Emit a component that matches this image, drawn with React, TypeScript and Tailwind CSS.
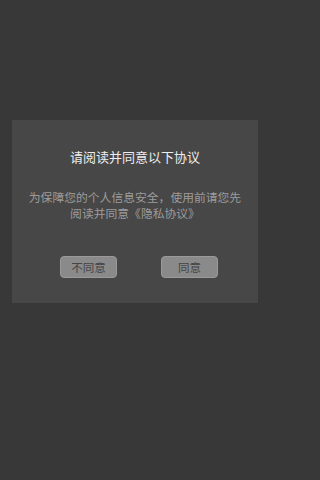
export default function App() {
  return (
    <div
      className="min-h-screen w-full bg-[#383838]"
      style={{ fontFamily: '"Noto Sans CJK SC", "Noto Sans", sans-serif' }}
    >
      <div className="h-[480px] w-[270px] pt-[120px]">
        <div className="mx-[12px] h-[183px] bg-[#474747] pt-[28px]">
          <h1 className="text-center text-[13px] leading-[18px] text-[#ededed]">请阅读并同意以下协议</h1>
          <p className="mt-[23px] text-center text-[11.8px] leading-[16px] text-[#9c9c9c]">
            为保障您的个人信息安全，使用前请您先
            <br />
            阅读并同意《隐私协议》
          </p>
          <div className="mt-[35px] flex gap-[44px] pl-[48px]">
            <button className="h-[22px] w-[57px] rounded-[4px] border border-[#9a9a9a] bg-[#8a8a8a] text-[11.5px] leading-[20px] text-[#444444]">
              不同意
            </button>
            <button className="h-[22px] w-[57px] rounded-[4px] border border-[#9a9a9a] bg-[#8a8a8a] text-[11.5px] leading-[20px] text-[#444444]">
              同意
            </button>
          </div>
        </div>
      </div>
    </div>
  )
}
